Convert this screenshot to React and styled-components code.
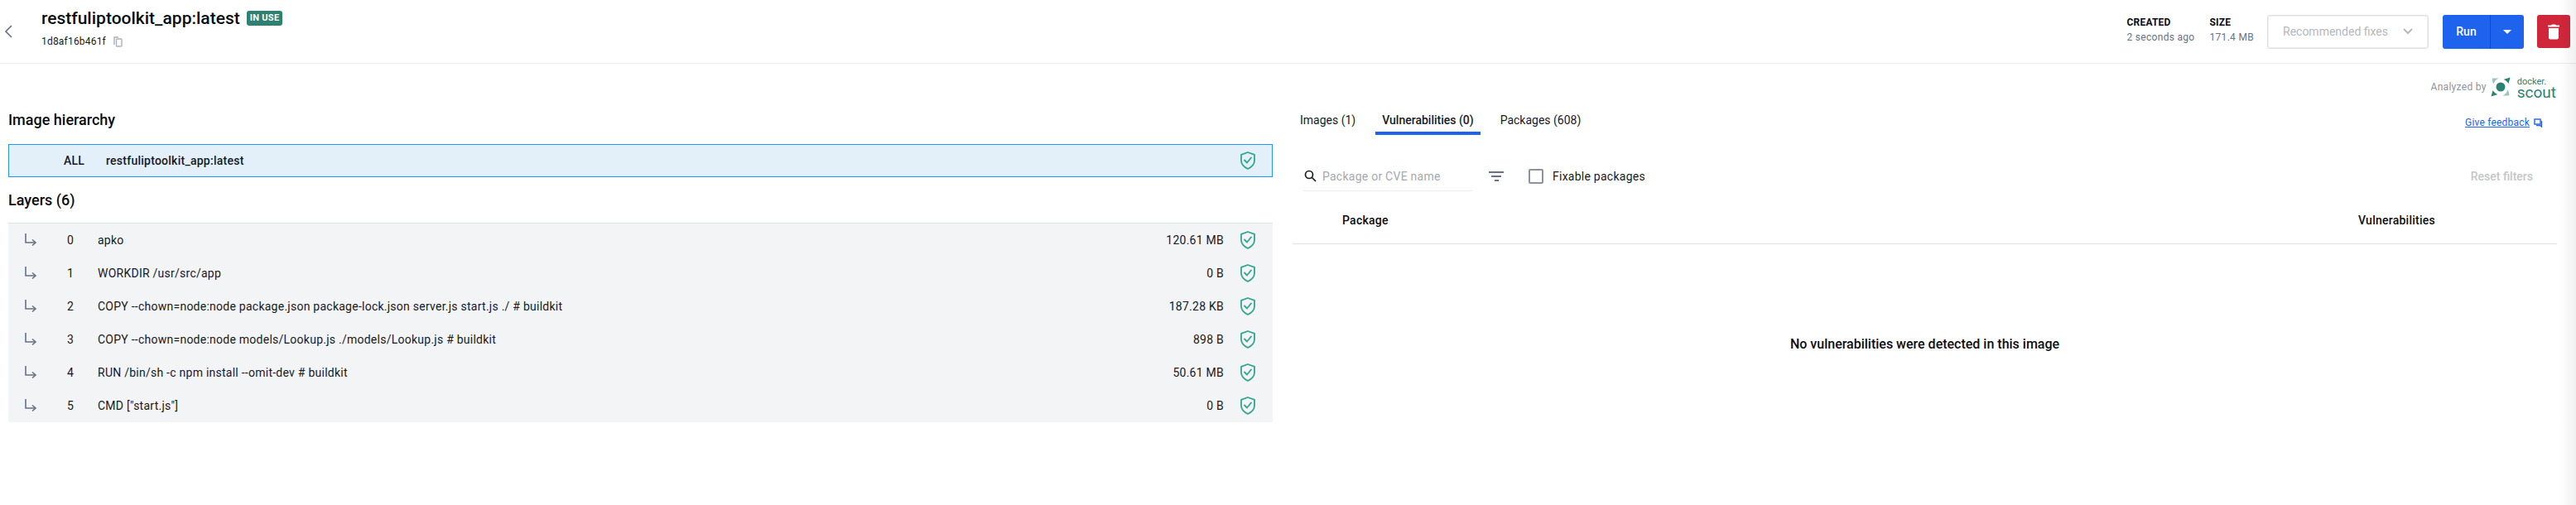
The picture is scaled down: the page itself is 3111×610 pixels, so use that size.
import React from 'react';
import styled, { createGlobalStyle } from 'styled-components';

const Global = createGlobalStyle`
  html, body { margin: 0; padding: 0; background: #fff; }
  body { font-family: Roboto, "Liberation Sans", sans-serif; color: #17191e; }
`
const Page = styled.div`
  width: 3111px;
  height: 610px;
  overflow: hidden;
  position: relative;
  background: #fff;
`
const EdgeShade = styled.div`
  position: absolute;
  top: 0;
  right: 0;
  width: 20px;
  height: 100%;
  background: linear-gradient(to right, rgba(0,0,0,0), rgba(0,0,0,0.06));
`
const Header = styled.header`
  height: 76px;
  border-bottom: 1px solid #ebebed;
  display: flex;
  align-items: center;
  padding: 0 7px 0 4px;
`
const BackButton = styled.div`
  width: 46px;
  display: flex;
  align-items: center;
  color: #677285;
`
const TitleBlock = styled.div`
  display: flex;
  flex-direction: column;
  gap: 8px;
  margin-top: -8px;
`
const TitleRow = styled.div`
  display: flex;
  align-items: center;
  gap: 8px;
`
const Title = styled.h1`
  margin: 0;
  font-size: 21px;
  line-height: 24px;
  font-weight: 500;
  color: #0b0d12;
`
const Badge = styled.span`
  background: #2d8171;
  color: #fff;
  font-size: 11px;
  line-height: 18px;
  height: 18px;
  font-weight: 700;
  letter-spacing: 0.3px;
  padding: 0 4px;
  border-radius: 3px;
`
const ImageId = styled.div`
  display: flex;
  align-items: center;
  gap: 9px;
  font-size: 12px;
  line-height: 16px;
  letter-spacing: 0.2px;
  color: #17191e;
`
const Spacer = styled.div`
  flex: 1;
`
const Stat = styled.div`
  margin-right: ${p => p.$gap}px;
  margin-top: -3px;
  display: flex;
  flex-direction: column;
  gap: 3px;
  font-size: 12px;
  line-height: 15px;
`
const StatLabel = styled.div`
  font-weight: 700;
  color: #0b0d12;
  letter-spacing: 0.2px;
`
const StatValue = styled.div`
  color: #677285;
  letter-spacing: 0.3px;
`
const FixesSelect = styled.div`
  width: 195px;
  height: 41px;
  box-sizing: border-box;
  border: 1px solid #dfe0e2;
  box-shadow: inset 0 0 0 0.5px #dfe0e2;
  border-radius: 3px;
  display: flex;
  align-items: center;
  justify-content: space-between;
  padding: 0 17px 0 18px;
  margin-right: 17px;
  font-size: 14px;
  color: #b5b8bd;
`
const SplitButton = styled.div`
  width: 98px;
  height: 41px;
  background: #1d63ed;
  border-radius: 3px;
  display: flex;
  color: #fff;
  font-size: 14px;
  font-weight: 500;
  margin-right: 16px;
`
const RunPart = styled.div`
  width: 57px;
  border-right: 1px solid #0f4dc4;
  display: flex;
  align-items: center;
  justify-content: center;
`
const CaretPart = styled.div`
  flex: 1;
  display: flex;
  align-items: center;
  justify-content: center;
`
const Caret = styled.div`
  width: 0;
  height: 0;
  border-left: 5px solid transparent;
  border-right: 5px solid transparent;
  border-top: 5px solid #fff;
`
const DeleteButton = styled.div`
  width: 40px;
  height: 40px;
  background: #d0263a;
  border-radius: 3px;
  display: flex;
  align-items: center;
  justify-content: center;
`
const Columns = styled.div`
  display: flex;
  padding-left: 10px;
`
const LeftColumn = styled.section`
  width: 1527px;
  flex: none;
  padding-top: 56px;
`
const SectionTitle = styled.h2`
  margin: 0;
  font-size: 18px;
  line-height: 24px;
  font-weight: 500;
  color: #0b0d12;
`
const SelectedRow = styled.div`
  margin-top: 17px;
  height: 40px;
  box-sizing: border-box;
  background: #e3f0fa;
  border: 1px solid #2196f3;
  display: flex;
  align-items: center;
  padding-right: 19px;
  font-size: 14px;
  font-weight: 500;
  letter-spacing: 0.25px;
`
const AllLabel = styled.span`
  width: 51px;
  margin-left: 66px;
  flex: none;
`
const LayersTitle = styled(SectionTitle)`
  margin-top: 16px;
`
const LayerList = styled.div`
  margin-top: 15px;
  border-top: 1px solid #e1e2e6;
  background: #f3f4f6;
`
const LayerRow = styled.div`
  height: 40px;
  display: flex;
  align-items: center;
  font-size: 14px;
  letter-spacing: 0.25px;
  padding-right: 20px;
  color: #17191e;
`
const ArrowCell = styled.div`
  width: 71px;
  padding-left: 19px;
  box-sizing: border-box;
  flex: none;
  display: flex;
`
const IndexCell = styled.div`
  width: 37px;
  flex: none;
`
const Command = styled.div`
  flex: 1;
`
const LayerSize = styled.div`
  margin-right: 19px;
`
const RightColumn = styled.section`
  flex: 1;
  min-width: 0;
  margin-left: 24px;
  margin-right: 23px;
`
const AnalyzedBy = styled.div`
  height: 54px;
  box-sizing: border-box;
  padding: 16px 1px 0 0;
  display: flex;
  justify-content: flex-end;
  align-items: flex-start;
  gap: 5px;
  font-size: 12px;
  line-height: 24px;
  letter-spacing: 0.3px;
  color: #8b93a3;
`
const ScoutText = styled.div`
  display: flex;
  flex-direction: column;
  color: #2d8171;
  margin-left: 3px;
  letter-spacing: 0;
`
const ScoutSmall = styled.span`
  font-size: 11px;
  line-height: 11px;
`
const ScoutBig = styled.span`
  font-size: 19px;
  line-height: 15px;
`
const TabBar = styled.div`
  display: flex;
  align-items: flex-end;
  justify-content: space-between;
  height: 32px;
  padding-left: 9px;
`
const Tabs = styled.div`
  display: flex;
  gap: 24px;
`
const Tab = styled.div`
  font-size: 14px;
  line-height: 20px;
  height: 24px;
  padding: 0 ${p => (p.$active ? 8 : 0)}px;
  font-weight: ${p => (p.$active ? 500 : 400)};
  color: #17191e;
  border-bottom: 4px solid ${p => (p.$active ? '#1d63ed' : 'transparent')};
`
const FeedbackLink = styled.a`
  display: flex;
  align-items: center;
  gap: 5px;
  font-size: 12px;
  line-height: 20px;
  letter-spacing: 0.2px;
  color: #1d63ed;
  margin: 7px 17px 0 0;
  align-self: flex-start;
`
const FeedbackText = styled.span`
  text-decoration: underline;
`
const FilterBar = styled.div`
  display: flex;
  align-items: center;
  margin-top: 30px;
  height: 40px;
  padding-left: 12px;
`
const SearchBox = styled.div`
  width: 206px;
  height: 34px;
  box-sizing: border-box;
  border-bottom: 1px solid #ebebed;
  display: flex;
  align-items: center;
  gap: 7px;
  padding-left: 2px;
  padding-bottom: 1px;
  margin-top: 1px;
  font-size: 14px;
  letter-spacing: 0.25px;
  color: #a5a9b0;
`
const FilterIcon = styled.div`
  margin-left: 19px;
  display: flex;
`
const CheckBox = styled.div`
  margin-left: 30px;
  width: 18px;
  height: 18px;
  box-sizing: border-box;
  border: 2px solid #8b93a3;
  border-radius: 2px;
`
const CheckLabel = styled.div`
  margin-left: 11px;
  font-size: 14px;
  letter-spacing: 0.25px;
  color: #17191e;
`
const ResetFilters = styled.div`
  margin-left: auto;
  margin-right: 29px;
  font-size: 14px;
  font-weight: 500;
  color: #c4c6ca;
`
const TableHead = styled.div`
  height: 62px;
  box-sizing: border-box;
  padding-top: 25px;
  border-bottom: 1px solid #e1e2e6;
  display: flex;
  font-size: 14px;
  line-height: 16px;
  letter-spacing: 0.25px;
  font-weight: 500;
  color: #0b0d12;
`
const PackageHead = styled.div`
  margin-left: 60px;
  width: 1227px;
  flex: none;
`
const EmptyMessage = styled.div`
  margin-top: 111px;
  text-align: center;
  font-size: 16px;
  line-height: 20px;
  font-weight: 500;
  color: #0b0d12;
`

const Shield = () => (
  <svg width="20" height="22" viewBox="0 0 20 22" fill="none" stroke="#31a58d" strokeWidth="1.8" strokeLinejoin="round" strokeLinecap="round">
    <path d="M10 1 L18 3.8 V11 C18 15.500 14.500 18.800 10 21 C5.500 18.800 2 15.500 2 11 V3.800 Z" />
    <path d="M6 10.500 L9 13.500 L14 7.500" />
  </svg>
);

const LayerArrow = () => (
  <svg width="16" height="18" viewBox="0 0 16 18" fill="none" stroke="#677285" strokeWidth="1.6">
    <path d="M2 1 V12 H13" />
    <path d="M10 8.500 L14 12 L10 15.500" />
  </svg>
);

const Back = () => (
  <svg width="12" height="20" viewBox="0 0 12 20" fill="none" stroke="currentColor" strokeWidth="1.7">
    <path d="M10 3 L3 10 L10 17" />
  </svg>
);

const CopyIcon = () => (
  <svg width="11" height="13" viewBox="0 0 11 13" fill="none" stroke="#aab0bc" strokeWidth="1.4">
    <path d="M1 10 V1 H6" />
    <rect x="3.500" y="3" width="6.500" height="9" rx="1" />
  </svg>
);

const Chevron = () => (
  <svg width="14" height="10" viewBox="0 0 14 10" fill="none" stroke="#b5b8bd" strokeWidth="2">
    <path d="M2 2 L7 7 L12 2" />
  </svg>
);

const Trash = () => (
  <svg width="14" height="19" viewBox="0 0 14 19" fill="#fff">
    <path d="M0 1.500 H4 L5 0.500 H9 L10 1.500 H14 V3.500 H0 Z" />
    <path d="M1 5 H13 V16.500 C13 17.600 12.100 18.500 11 18.500 H3 C1.900 18.500 1 17.600 1 16.500 Z" />
  </svg>
);

const ScoutLogo = () => (
  <svg width="24" height="24" viewBox="0 0 24 24">
    <circle cx="12" cy="12" r="5.500" fill="#2d8171" />
    <path d="M23.500 0.500 L21.500 8 C20 5.500 18 4 15.500 3 Z" fill="#2d8171" />
    <path d="M0.500 23.500 L2.500 16 C4 18.500 6 20 8.500 21 Z" fill="#2d8171" />
    <path d="M2 1.500 H10 C7 2.500 4.500 5 3.500 8.500 C2 6.500 1.500 3.500 2 1.500 Z" fill="#9cc6bd" />
    <path d="M22 22.500 H14 C17 21.500 19.500 19 20.500 15.500 C22 17.500 22.500 20.500 22 22.500 Z" fill="#9cc6bd" />
  </svg>
);

const ChatIcon = () => (
  <svg width="11" height="11" viewBox="0 0 11 11" fill="none" stroke="#1d63ed" strokeWidth="1.400">
    <rect x="1" y="1" width="7" height="6" />
    <path d="M9.500 3 V10 L7.500 8.500 H3" />
  </svg>
);

const SearchIcon = () => (
  <svg width="15" height="15" viewBox="0 0 15 15" fill="none" stroke="#17191e" strokeWidth="1.700">
    <circle cx="6" cy="6" r="4.500" />
    <path d="M9.500 9.500 L14 14" />
  </svg>
);

const FilterGlyph = () => (
  <svg width="18" height="12" viewBox="0 0 18 12" fill="#677285">
    <rect x="0" y="0" width="18" height="2" />
    <rect x="3" y="5" width="12" height="2" />
    <rect x="7" y="10" width="5" height="2" />
  </svg>
);

const layers = [
  { cmd: 'apko', size: '120.61 MB' },
  { cmd: 'WORKDIR /usr/src/app', size: '0 B' },
  { cmd: 'COPY --chown=node:node package.json package-lock.json server.js start.js ./ # buildkit', size: '187.28 KB' },
  { cmd: 'COPY --chown=node:node models/Lookup.js ./models/Lookup.js # buildkit', size: '898 B' },
  { cmd: 'RUN /bin/sh -c npm install --omit-dev # buildkit', size: '50.61 MB' },
  { cmd: 'CMD ["start.js"]', size: '0 B' },
];

export default function App() {
  return (
    <Page>
      <Global />
      <Header>
        <BackButton><Back /></BackButton>
        <TitleBlock>
          <TitleRow>
            <Title>restfuliptoolkit_app:latest</Title>
            <Badge>IN USE</Badge>
          </TitleRow>
          <ImageId>1d8af16b461f <CopyIcon /></ImageId>
        </TitleBlock>
        <Spacer />
        <Stat $gap={18}>
          <StatLabel>CREATED</StatLabel>
          <StatValue>2 seconds ago</StatValue>
        </Stat>
        <Stat $gap={16}>
          <StatLabel>SIZE</StatLabel>
          <StatValue>171.4 MB</StatValue>
        </Stat>
        <FixesSelect>Recommended fixes <Chevron /></FixesSelect>
        <SplitButton>
          <RunPart>Run</RunPart>
          <CaretPart><Caret /></CaretPart>
        </SplitButton>
        <DeleteButton><Trash /></DeleteButton>
      </Header>
      <Columns>
        <LeftColumn>
          <SectionTitle>Image hierarchy</SectionTitle>
          <SelectedRow>
            <AllLabel>ALL</AllLabel>
            <Command>restfuliptoolkit_app:latest</Command>
            <Shield />
          </SelectedRow>
          <LayersTitle>Layers (6)</LayersTitle>
          <LayerList>
            {layers.map((layer, i) => (
              <LayerRow key={i}>
                <ArrowCell><LayerArrow /></ArrowCell>
                <IndexCell>{i}</IndexCell>
                <Command>{layer.cmd}</Command>
                <LayerSize>{layer.size}</LayerSize>
                <Shield />
              </LayerRow>
            ))}
          </LayerList>
        </LeftColumn>
        <RightColumn>
          <AnalyzedBy>
            Analyzed by <ScoutLogo />
            <ScoutText>
              <ScoutSmall>docker.</ScoutSmall>
              <ScoutBig>scout</ScoutBig>
            </ScoutText>
          </AnalyzedBy>
          <TabBar>
            <Tabs>
              <Tab>Images (1)</Tab>
              <Tab $active>Vulnerabilities (0)</Tab>
              <Tab>Packages (608)</Tab>
            </Tabs>
            <FeedbackLink><FeedbackText>Give feedback</FeedbackText> <ChatIcon /></FeedbackLink>
          </TabBar>
          <FilterBar>
            <SearchBox><SearchIcon />Package or CVE name</SearchBox>
            <FilterIcon><FilterGlyph /></FilterIcon>
            <CheckBox />
            <CheckLabel>Fixable packages</CheckLabel>
            <ResetFilters>Reset filters</ResetFilters>
          </FilterBar>
          <TableHead>
            <PackageHead>Package</PackageHead>
            <div>Vulnerabilities</div>
          </TableHead>
          <EmptyMessage>No vulnerabilities were detected in this image</EmptyMessage>
        </RightColumn>
      </Columns>
      <EdgeShade />
    </Page>
  );
}
